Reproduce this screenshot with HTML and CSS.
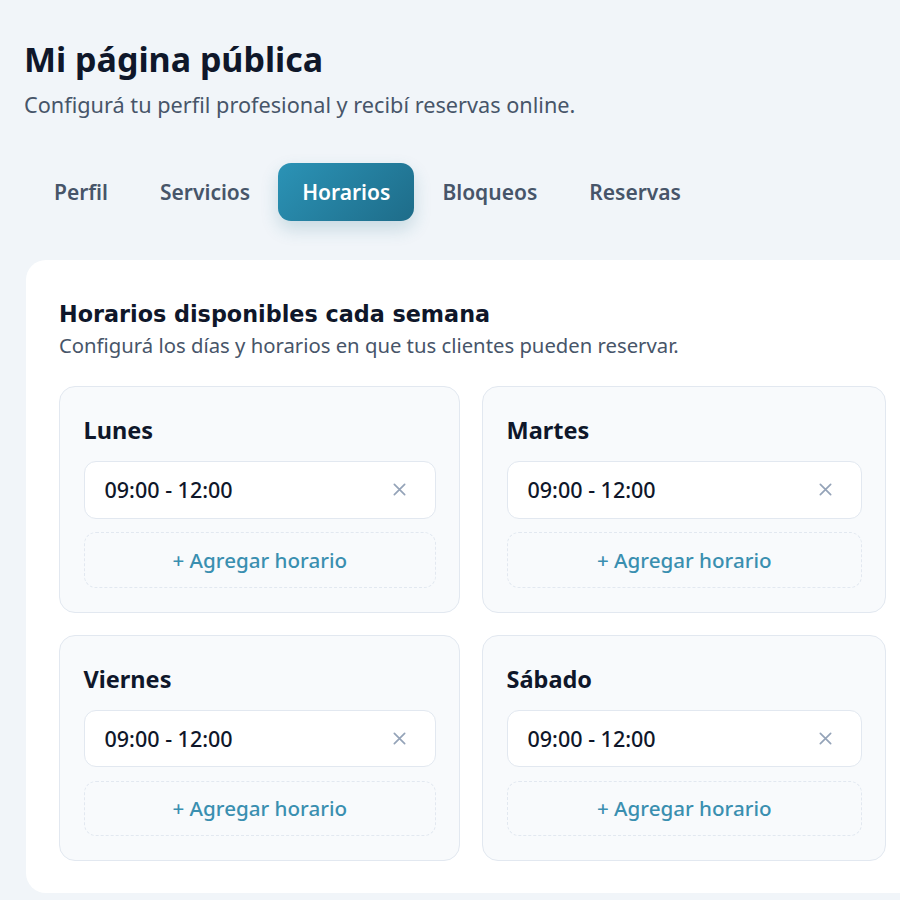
FILE: index.html
```html
<!DOCTYPE html>
<html lang="es">
<head>
<meta charset="utf-8">
<title>Mi página pública</title>
<link rel="stylesheet" href="styles.css">
</head>
<body>
<div class="page">
  <h1 class="title">Mi página pública</h1>
  <p class="subtitle">Configurá tu perfil profesional y recibí reservas online.</p>
  <nav class="tabs">
    <span class="tab">Perfil</span>
    <span class="tab">Servicios</span>
    <span class="tab active">Horarios</span>
    <span class="tab">Bloqueos</span>
    <span class="tab">Reservas</span>
  </nav>
  <section class="card">
    <h2 class="card-title">Horarios disponibles cada semana</h2>
    <p class="card-sub">Configurá los días y horarios en que tus clientes pueden reservar.</p>
    <div class="days">
      <div class="day">
        <h3 class="day-name">Lunes</h3>
        <div class="slot"><span>09:00 - 12:00</span><svg class="x" viewBox="0 0 16 16"><path d="M2.5 2.5l11 11M13.5 2.5l-11 11"/></svg></div>
        <div class="add">+ Agregar horario</div>
      </div>
      <div class="day">
        <h3 class="day-name">Martes</h3>
        <div class="slot"><span>09:00 - 12:00</span><svg class="x" viewBox="0 0 16 16"><path d="M2.5 2.5l11 11M13.5 2.5l-11 11"/></svg></div>
        <div class="add">+ Agregar horario</div>
      </div>
      <div class="day">
        <h3 class="day-name">Viernes</h3>
        <div class="slot"><span>09:00 - 12:00</span><svg class="x" viewBox="0 0 16 16"><path d="M2.5 2.5l11 11M13.5 2.5l-11 11"/></svg></div>
        <div class="add">+ Agregar horario</div>
      </div>
      <div class="day">
        <h3 class="day-name">Sábado</h3>
        <div class="slot"><span>09:00 - 12:00</span><svg class="x" viewBox="0 0 16 16"><path d="M2.5 2.5l11 11M13.5 2.5l-11 11"/></svg></div>
        <div class="add">+ Agregar horario</div>
      </div>
    </div>
  </section>
</div>
</body>
</html>
```
FILE: styles.css
```css
* { box-sizing: border-box; }
html, body { margin: 0; padding: 0; }
body {
  background: #f1f5f9;
  font-family: "Noto Sans", "Open Sans", sans-serif;
  color: #0f172a;
  overflow: hidden;
  width: 900px;
  height: 900px;
}
.page {
  width: 930px;
  padding: 39px 0 0 24px;
}
.title {
  margin: 0;
  font-size: 34px;
  line-height: 41px;
  font-weight: 700;
  color: #0f172a;
}
.subtitle {
  margin: 10px 0 0;
  font-size: 21.7px;
  line-height: 30px;
  color: #475569;
}
.tabs {
  display: flex;
  gap: 4px;
  margin: 43px 0 0 6px;
}
.tab {
  padding: 0 24px;
  height: 58px;
  display: flex;
  align-items: center;
  border-radius: 13px;
  font-size: 21px;
  font-weight: 600;
  color: #475569;
}
.tab.active {
  color: #ffffff;
  background: linear-gradient(135deg, #2b93b6 0%, #1e6c89 100%);
  box-shadow: 0 8px 18px rgba(30, 108, 137, 0.2);
}
.card {
  margin: 39px 0 0 2px;
  width: 895px;
  background: #ffffff;
  border-radius: 20px;
  padding: 39px 34px 32px 33px;
}
.card-title {
  margin: 0;
  font-family: "DejaVu Sans", "Noto Sans", sans-serif;
  font-size: 22.3px;
  line-height: 30px;
  font-weight: 700;
  color: #0f172a;
}
.card-sub {
  margin: 2px 0 0;
  font-size: 20.3px;
  line-height: 28px;
  color: #475569;
}
.days {
  display: grid;
  grid-template-columns: 401px 404px;
  gap: 22px;
  margin-top: 27px;
}
.day {
  background: #f8fafc;
  border: 1.5px solid #e2e8f0;
  border-radius: 16px;
  padding: 28px 23px 24px 23.5px;
}
.day-name {
  margin: 0;
  font-size: 23.5px;
  line-height: 30px;
  font-weight: 700;
  color: #0f172a;
}
.slot {
  margin-top: 16px;
  height: 57.6px;
  background: #ffffff;
  border: 1.5px solid #e2e8f0;
  border-radius: 12px;
  display: flex;
  align-items: center;
  justify-content: space-between;
  padding: 0 28px 0 20px;
  font-size: 21.5px;
  font-weight: 500;
  color: #0f172a;
}
.x {
  width: 15px;
  height: 15px;
  fill: none;
  stroke: #94a3b8;
  stroke-width: 1.8;
  stroke-linecap: round;
}
.add {
  margin-top: 13.4px;
  height: 55.6px;
  border: 1.5px dashed #e2e8f0;
  border-radius: 12px;
  display: flex;
  align-items: center;
  justify-content: center;
  font-size: 20.6px;
  font-weight: 500;
  color: #3a8fb0;
}
```
